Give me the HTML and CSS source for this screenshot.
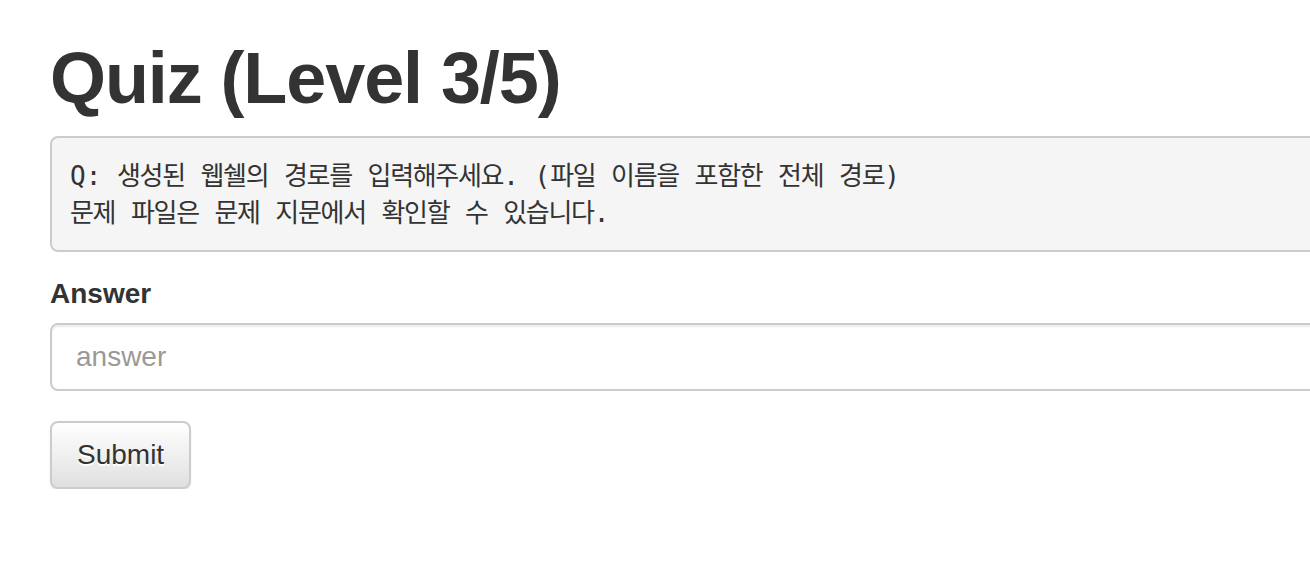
FILE: index.html
```html
<!DOCTYPE html>
<html lang="ko">
<head>
<meta charset="utf-8">
<title>Quiz (Level 3/5)</title>
<link rel="stylesheet" href="styles.css">
</head>
<body>
<div class="page">
  <h1 class="title">Quiz (Level 3/5)</h1>
  <pre class="question">Q: <span class="ko">생성된 웹쉘의 경로를 입력해주세요</span>. (<span class="ko">파일 이름을 포함한 전체 경로</span>)
<span class="ko">문제 파일은 문제 지문에서 확인할 수 있습니다</span>.</pre>
  <form class="quiz-form">
    <div class="form-group">
      <label class="field-label" for="answer">Answer</label>
      <input class="field-input" id="answer" type="text" placeholder="answer">
    </div>
    <button class="btn" type="button">Submit</button>
  </form>
</div>
</body>
</html>
```

FILE: styles.css
```css
html, body {
  margin: 0;
  padding: 0;
  overflow: hidden;
  background: #fff;
}

body {
  font-family: "Liberation Sans", Arial, Helvetica, sans-serif;
  color: #333;
}

.page {
  width: 1300px;
  padding: 0 50px;
}

.title {
  font-size: 72px;
  font-weight: bold;
  letter-spacing: -1.1px;
  line-height: 1.1;
  margin: 39px 0 18px;
  color: #333;
}

.question {
  box-sizing: border-box;
  height: 116px;
  margin: 0 0 22px;
  padding: 20px 18px 17px;
  font-family: "DejaVu Sans Mono", Menlo, "Noto Sans CJK KR", monospace;
  font-size: 26px;
  line-height: 37px;
  color: #333;
  background: #f5f5f5;
  border: 2px solid #ccc;
  border-radius: 8px;
  white-space: pre;
  overflow: hidden;
}

.ko {
  letter-spacing: -1.3px;
  word-spacing: 1.3px;
}

.quiz-form {
  margin: 0;
}

.form-group {
  margin-bottom: 30px;
}

.field-label {
  display: inline-block;
  font-size: 28px;
  font-weight: bold;
  line-height: 40px;
  margin-bottom: 9px;
}

.field-input {
  display: block;
  box-sizing: border-box;
  width: 100%;
  height: 68px;
  padding: 12px 24px;
  font-family: "Liberation Sans", Arial, sans-serif;
  font-size: 28px;
  line-height: 40px;
  color: #555;
  background: #fff;
  border: 2px solid #ccc;
  border-radius: 8px;
  box-shadow: inset 0 2px 2px rgba(0, 0, 0, 0.075);
  outline: none;
}

.field-input::placeholder {
  color: #999;
  opacity: 1;
}

.btn {
  display: inline-block;
  box-sizing: border-box;
  height: 68px;
  padding: 12px 25px;
  font-family: "Liberation Sans", Arial, sans-serif;
  font-size: 28px;
  line-height: 40px;
  color: #333;
  background-color: #e0e0e0;
  background-image: linear-gradient(to bottom, #fff 0, #e0e0e0 100%);
  border: 2px solid #ccc;
  border-radius: 8px;
  text-shadow: 0 2px 0 #fff;
  box-shadow: inset 0 2px 0 rgba(255, 255, 255, 0.15), 0 2px 2px rgba(0, 0, 0, 0.075);
  cursor: pointer;
}
```
